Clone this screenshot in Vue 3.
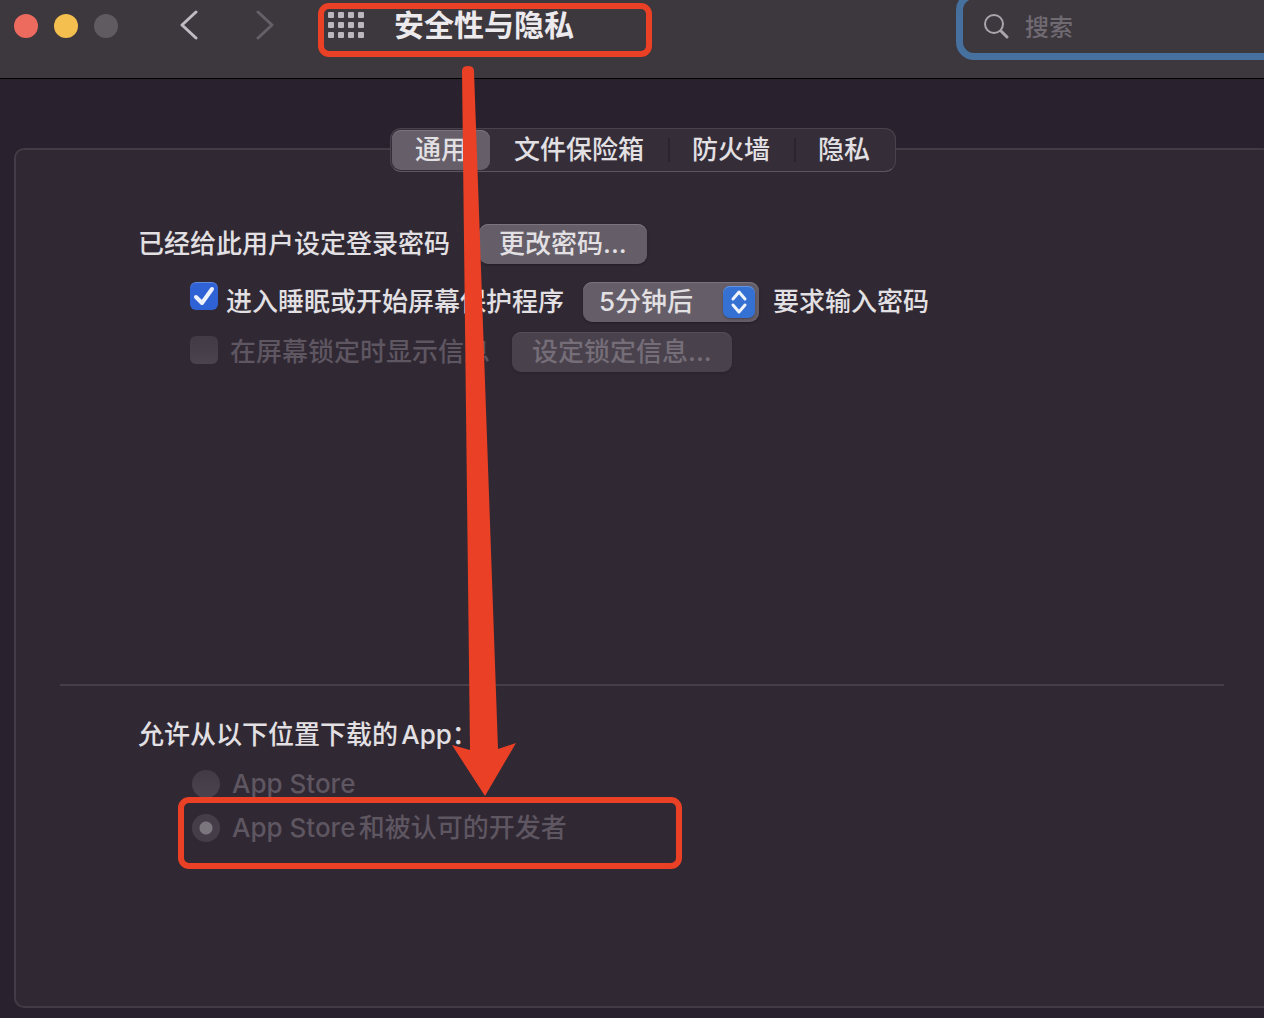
<template>
  <div class="window">
    <header class="toolbar">
      <div class="lights">
        <button class="light close" aria-label="关闭"></button>
        <button class="light minimize" aria-label="最小化"></button>
        <button class="light zoom" aria-label="缩放" disabled></button>
      </div>
      <div class="nav-buttons">
        <button class="icon-button" aria-label="后退">
          <svg width="18" height="30" viewBox="0 0 18 30">
            <path d="M16 2 L2 15 L16 28" class="chevron" />
          </svg>
        </button>
        <button class="icon-button" aria-label="前进" disabled>
          <svg width="18" height="30" viewBox="0 0 18 30">
            <path d="M2 2 L16 15 L2 28" class="chevron dim" />
          </svg>
        </button>
      </div>
      <button class="icon-button" aria-label="显示全部">
        <svg width="36" height="26" viewBox="0 0 36 26">
          <template v-for="row in 3" :key="row">
            <rect
              v-for="col in 4"
              :key="col"
              :x="(col - 1) * 10"
              :y="(row - 1) * 10"
              width="6"
              height="6"
              rx="1"
              class="grid-dot"
            />
          </template>
        </svg>
      </button>
      <h1 class="title">安全性与隐私</h1>
      <label class="search">
        <svg width="26" height="26" viewBox="0 0 26 26">
          <circle cx="11" cy="11" r="9" class="lens" />
          <path d="M18 18 L24 24" class="lens handle" />
        </svg>
        <input v-model="query" type="text" placeholder="搜索" aria-label="搜索" />
      </label>
    </header>

    <main class="content">
      <section class="panel">
        <nav class="tabs">
          <button
            v-for="tab in tabs"
            :key="tab"
            class="tab"
            :class="{ active: tab === activeTab }"
            @click="activeTab = tab"
          >
            {{ tab }}
          </button>
        </nav>

        <div class="settings">
          <div class="row password-row">
            <span>已经给此用户设定登录密码</span>
            <button class="push-button">更改密码...</button>
          </div>

          <div class="row sleep-row">
            <input id="require" v-model="requirePassword" type="checkbox" class="check" />
            <label for="require">进入睡眠或开始屏幕保护程序</label>
            <div class="popup">
              <select v-model="delay" aria-label="要求输入密码的时间">
                <option v-for="item in delays" :key="item">{{ item }}</option>
              </select>
              <svg class="stepper" width="32" height="32" viewBox="0 0 32 32">
                <path d="M10 13 L16 6 L22 13 M10 19 L16 26 L22 19" />
              </svg>
            </div>
            <span>要求输入密码</span>
          </div>

          <div class="row message-row">
            <input id="message" type="checkbox" class="check" disabled />
            <label for="message">在屏幕锁定时显示信息</label>
            <button class="push-button" disabled>设定锁定信息...</button>
          </div>
        </div>

        <hr class="divider" />

        <div class="sources">
          <p id="sources-title" class="sources-title">允许从以下位置下载的App：</p>
          <div role="radiogroup" aria-labelledby="sources-title" class="radios">
            <div v-for="source in sources" :key="source.id" class="radio-row">
              <input
                :id="source.id"
                v-model="allowed"
                type="radio"
                name="source"
                :value="source.id"
                disabled
              />
              <label :for="source.id">{{ source.label }}</label>
            </div>
          </div>
        </div>
      </section>
    </main>

    <!-- Red guide marks over the window -->
    <svg class="marks" aria-hidden="true">
      <rect x="321" y="6" width="328" height="48" rx="8" class="mark-box" />
      <rect x="181" y="800" width="498" height="66" rx="8" class="mark-box" />
      <path
        d="M462 71 Q462 66 468 66 Q474 66 474 71 L498 749 L516 743 L485 796 L452 745 L470 750 Z"
        class="mark-arrow"
      />
    </svg>
  </div>
</template>

<script setup>
import { ref } from "vue";

const query = ref("");

const tabs = ["通用", "文件保险箱", "防火墙", "隐私"];
const activeTab = ref("通用");

const requirePassword = ref(true);
const delays = ["立即", "5分钟后", "15分钟后", "1小时后"];
const delay = ref("5分钟后");

const sources = [
  { id: "store", label: "App Store" },
  { id: "developers", label: "App Store和被认可的开发者" },
];
const allowed = ref("developers");
</script>

<style>
body {
  margin: 0;
  background-color: #2a212e;
}
</style>

<style scoped>
* {
  box-sizing: border-box;
}

.window {
  position: relative;
  display: flex;
  flex-direction: column;
  min-height: 100vh;
  overflow: hidden;
  color: #e2e0e3;
  font-family: Inter, "Noto Sans CJK SC", sans-serif;
  font-size: 26px;
  font-weight: 500;
  line-height: 40px;
  white-space: nowrap;
  text-autospace: normal;
}

button,
input,
select {
  margin: 0;
  padding: 0;
  border: none;
  background: none;
  color: inherit;
  font: inherit;
}

/* Toolbar */
.toolbar {
  display: flex;
  align-items: flex-start;
  height: 79px;
  padding: 6px 0 0 14px;
  overflow: hidden;
  background-color: #3d373e;
  border-bottom: 1px solid #000;
}

.lights {
  display: flex;
  align-items: center;
  gap: 16px;
  height: 40px;
}

.light {
  width: 24px;
  height: 24px;
  border-radius: 50%;
}

.close {
  background-color: #ed6a5f;
}

.minimize {
  background-color: #f5bf4f;
}

.zoom {
  background-color: #605b61;
}

.nav-buttons {
  display: flex;
  gap: 58px;
  margin: 0 54px 0 62px;
}

.icon-button {
  display: flex;
  align-items: center;
  height: 38px;
}

.chevron {
  fill: none;
  stroke: #c0bbc2;
  stroke-width: 3;
  stroke-linecap: round;
  stroke-linejoin: round;
}

.chevron.dim {
  stroke: #655f67;
}

.grid-dot {
  fill: #bcb6be;
}

.title {
  margin: 0 0 0 30px;
  color: #eceaec;
  font-size: 30px;
  line-height: 38px;
  font-weight: 700;
}

/* The field runs on past the right edge of the window */
.search {
  display: flex;
  align-items: center;
  gap: 16px;
  width: 338px;
  height: 68px;
  margin: -14px -30px 0 auto;
  padding-left: 20px;
  border: 7px solid #46719f;
  border-radius: 18px;
}

.search input {
  flex: 1;
  min-width: 0;
  padding-top: 3px;
  font-size: 24px;
  outline: none;
}

.search input::placeholder {
  color: #706a72;
  opacity: 1;
}

.lens {
  fill: none;
  stroke: #aaa5ac;
  stroke-width: 2;
}

.handle {
  stroke-width: 3;
  stroke-linecap: round;
}

/* Panel */
.content {
  display: flex;
  flex: 1;
  padding: 69px 0 10px 14px;
}

.panel {
  display: flex;
  flex: 1;
  flex-direction: column;
  margin-right: -8px;
  background-color: #302833;
  border: 2px solid #433b46;
  border-radius: 10px;
}

.tabs {
  display: flex;
  align-self: center;
  height: 44px;
  margin-top: -22px;
  padding: 1px;
  background-color: #352d38;
  border: 1px solid #4a424d;
  border-bottom-color: #5d5560;
  border-radius: 11px;
}

.tab {
  position: relative;
  padding: 0 24px;
  border-radius: 9px;
  line-height: 38px;
}

.tab:first-child {
  padding: 0 23px;
}

.tab + .tab + .tab::before {
  content: "";
  position: absolute;
  top: 8px;
  left: 0;
  width: 2px;
  height: 24px;
  background-color: #2b232e;
}

.tab.active {
  background-color: #665f69;
  box-shadow: inset 0 1px #7b747e;
}

.settings {
  padding: 52px 0 0 122px;
}

.row {
  display: flex;
  align-items: center;
}

.push-button {
  height: 40px;
  padding: 0 20px;
  background-color: #655e68;
  border-radius: 9px;
  box-shadow: inset 0 1px #7b747e, 0 1px 2px #241c27;
}

.push-button:disabled {
  color: #756e78;
  background-color: #49414c;
  box-shadow: inset 0 1px #554d58, 0 1px 2px #2a222d;
}

.password-row {
  gap: 29px;
}

.sleep-row {
  margin: 18px 0 10px 52px;
}

.message-row {
  gap: 12px;
  margin-left: 52px;
  color: #5e5661;
}

.message-row .push-button {
  margin-left: 10px;
}

.check,
.radio-row input {
  flex: none;
  appearance: none;
  width: 28px;
  height: 28px;
  background: linear-gradient(#423a45, #4b434e);
}

.check {
  border-radius: 6px;
  margin-bottom: 4px;
}

.sleep-row .check {
  margin: 0 8px 12px 0;
}

.check:checked {
  background: #2f62d5
    url("data:image/svg+xml,%3Csvg xmlns='http://www.w3.org/2000/svg' viewBox='0 0 28 28'%3E%3Cpath d='M6 15 L12 21 L22 7' fill='none' stroke='%23eef2fc' stroke-width='4' stroke-linecap='round' stroke-linejoin='round'/%3E%3C/svg%3E");
  box-shadow: inset 0 1px #6289e0;
}

.popup {
  position: relative;
  margin: 0 14px 0 19px;
}

.popup select {
  display: block;
  appearance: none;
  width: 176px;
  height: 40px;
  padding-left: 16px;
  background-color: #655e68;
  border-radius: 9px;
  box-shadow: inset 0 1px #7b747e, 0 1px 2px #241c27;
}

.stepper {
  position: absolute;
  top: 4px;
  right: 4px;
  background-color: #3571d3;
  border-radius: 7px;
  box-shadow: inset 0 1px #6495e2, 0 1px 2px #4a434d;
  pointer-events: none;
}

.stepper path {
  fill: none;
  stroke: #eef3fc;
  stroke-width: 3;
  stroke-linecap: round;
  stroke-linejoin: round;
}

.divider {
  height: 2px;
  margin: 312px 46px 0 44px;
  border: none;
  background-color: #463e49;
}

.sources {
  padding: 29px 0 0 122px;
}

.sources-title {
  margin: 0;
}

.radios {
  display: flex;
  flex-direction: column;
  gap: 4px;
  margin: 9px 0 0 54px;
}

.radio-row {
  display: flex;
  align-items: center;
  gap: 12px;
  color: #5e5661;
}

.radio-row input {
  border-radius: 50%;
}

.radio-row input:checked {
  background: radial-gradient(circle, #7b757e 6px, #453d48 7px);
}

/* Guide marks */
.marks {
  position: absolute;
  inset: 0;
  width: 100%;
  height: 100%;
  pointer-events: none;
}

.mark-box {
  fill: none;
  stroke: #ea4025;
  stroke-width: 6;
}

.mark-arrow {
  fill: #ea4025;
}
</style>
